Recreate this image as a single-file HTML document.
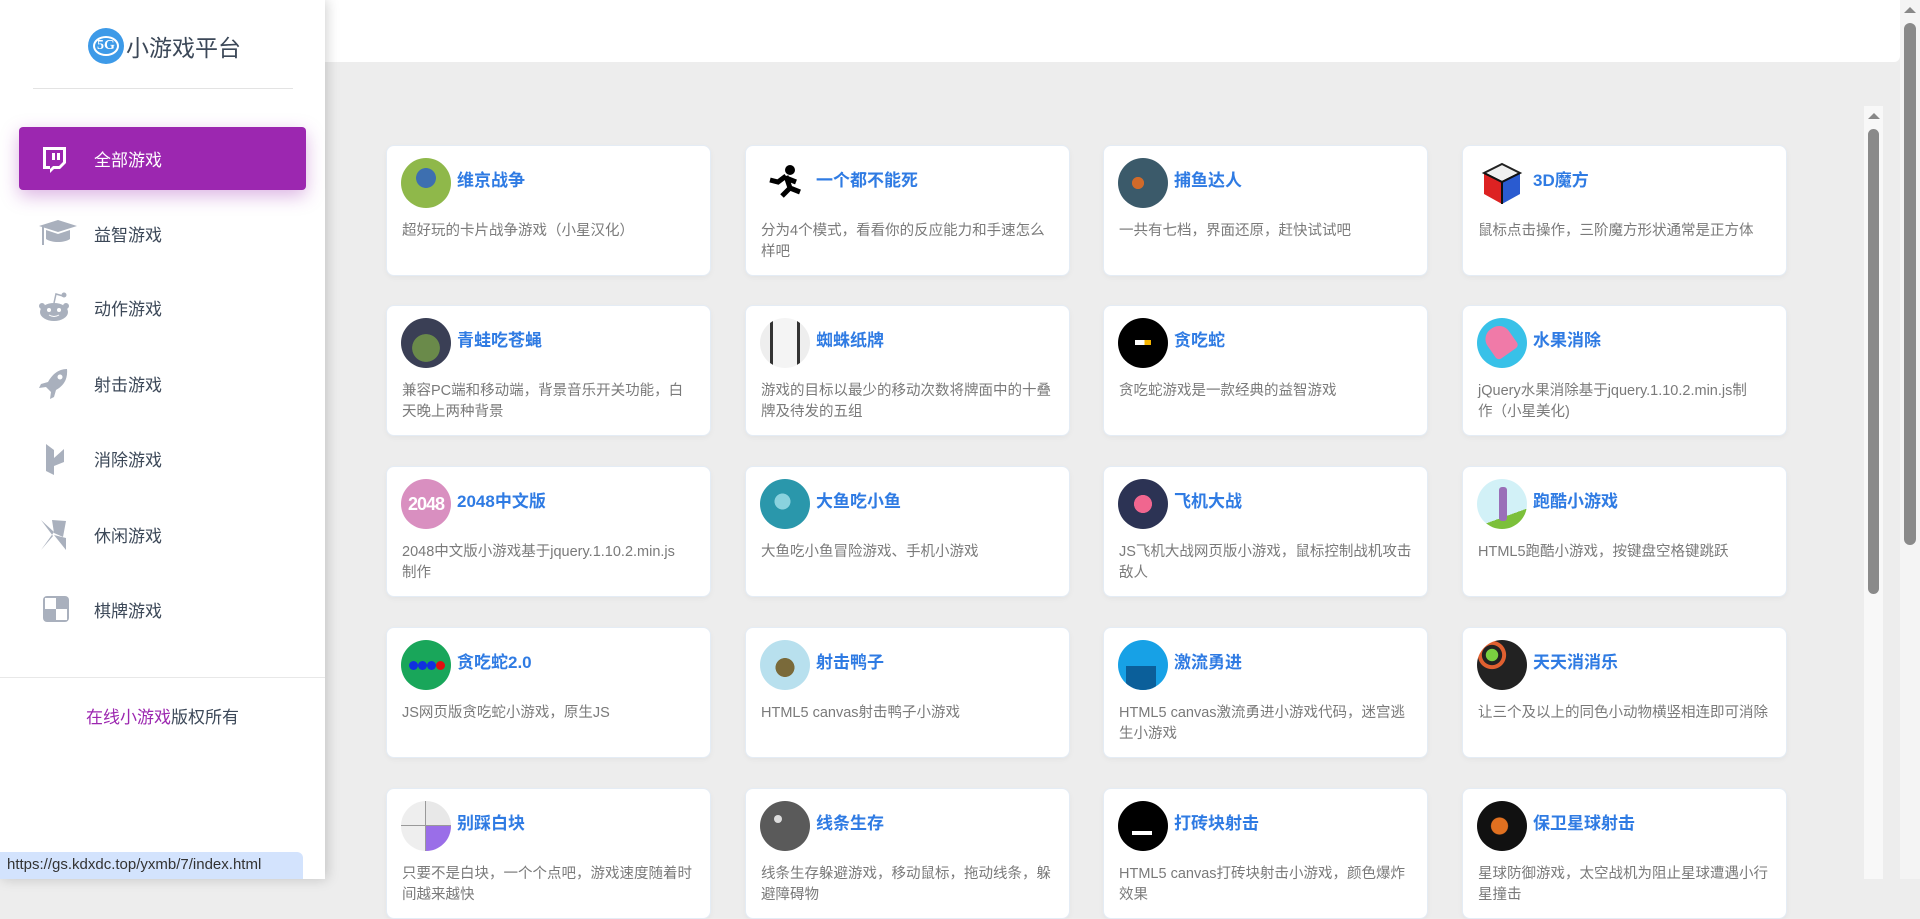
<!DOCTYPE html>
<html><head><meta charset="utf-8">
<style>
*{margin:0;padding:0;box-sizing:border-box}
html,body{width:1920px;height:879px;overflow:hidden;background:#ededed;font-family:"Liberation Sans","Noto Sans CJK SC",sans-serif}
.side{position:absolute;left:0;top:0;width:325px;height:879px;background:#fff;box-shadow:2px 0 12px rgba(0,0,0,.18);z-index:3}
.logo{position:absolute;left:88px;top:27px;height:38px;display:flex;align-items:center;font-size:23px;color:#3c4858}
.logo .c{width:36px;height:36px;border-radius:50%;background:#3d9ae8;color:#fff;font-family:"Liberation Serif",serif;font-size:14px;font-weight:bold;display:flex;align-items:center;justify-content:center;margin-right:2px}
.logo .c span{border:2px solid #fff;border-radius:50%;padding:2px 2px;line-height:12px}
.hr1{position:absolute;left:33px;top:88px;width:260px;height:1px;background:#e3e3e3}
.item{position:absolute;left:19px;width:287px;height:63px;display:flex;align-items:center;font-size:17px;color:#3c4858}
.item svg{position:absolute;left:19px}
.item span{position:absolute;left:75px}
.item.act{background:#9c27b0;color:#fff;border-radius:4px;box-shadow:0 6px 18px rgba(156,39,176,.35)}
.hr2{position:absolute;left:0;top:677px;width:325px;height:1px;background:#e8e8e8}
.foot{position:absolute;left:0;top:703px;width:325px;text-align:center;font-size:17px;color:#3c4858}
.foot b{font-weight:normal;color:#9c27b0}
.status{position:absolute;left:0;top:852px;width:303px;height:27px;background:#d3e3fd;border-top-right-radius:6px;font-size:15px;color:#333;padding:4px 0 0 7px;z-index:5}
.head{position:absolute;left:325px;top:0;width:1575px;height:62px;background:#fff;border-bottom-right-radius:6px}
.card{position:absolute;width:325px;height:131px;background:#fff;border:1px solid #e4ecf5;border-radius:8px;box-shadow:0 2px 6px rgba(0,0,0,.04)}
.ic{position:absolute;left:14px;top:12px;width:50px;height:50px;border-radius:50%;overflow:hidden}
.t{position:absolute;left:70px;top:20px;font-size:17px;font-weight:bold;color:#2f7be3}
.d{position:absolute;left:15px;top:75px;font-size:14.5px;line-height:21px;color:#7a7a7a;white-space:nowrap}
.sb1{position:absolute;left:1864px;top:106px;width:19px;height:773px;background:#f8f8f8}
.sb1 .a{position:absolute;left:4px;top:7px;border-left:6px solid transparent;border-right:6px solid transparent;border-bottom:6px solid #888}
.sb1 .th{position:absolute;left:4px;top:23px;width:11px;height:465px;border-radius:6px;background:#8a8a8a}
.sb2{position:absolute;left:1900px;top:0;width:20px;height:879px;background:#f4f4f4}
.sb2 .a{position:absolute;left:4px;top:7px;border-left:6px solid transparent;border-right:6px solid transparent;border-bottom:6px solid #888}
.sb2 .th{position:absolute;left:4px;top:23px;width:12px;height:522px;border-radius:6px;background:#8a8a8a}
</style></head><body>
<div class="head"></div>
<div class="side">
 <div class="logo"><div class="c"><span>5G</span></div>小游戏平台</div>
 <div class="hr1"></div>
 <div class="item act" style="top:127px"><svg width="30" height="30" viewBox="0 0 30 30"><path d="M5 3h23v16l-6 6h-6l-4 4v-4H5z" fill="#fff"/><path d="M8 6h17v12l-4 4h-6l-3 3v-3H8z" fill="#9c27b0"/><rect x="14" y="9" width="3" height="7" fill="#fff"/><rect x="19" y="9" width="3" height="7" fill="#fff"/></svg><span>全部游戏</span></div>
 <div class="item" style="top:202px"><svg width="40" height="30" viewBox="0 0 40 30"><path d="M1 7l19-6 19 6-19 6z" fill="#a9b0bd"/><path d="M8 11v9c6 4 18 4 24 0v-9l-12 4z" fill="#a9b0bd"/><rect x="4" y="8" width="2" height="18" fill="#a9b0bd"/></svg><span>益智游戏</span></div>
 <div class="item" style="top:276px"><svg width="34" height="32" viewBox="0 0 34 32"><ellipse cx="16" cy="20" rx="14" ry="9" fill="#a9b0bd"/><circle cx="4" cy="14" r="3" fill="#a9b0bd"/><circle cx="28" cy="14" r="3" fill="#a9b0bd"/><path d="M16 11l2-9 7 2" stroke="#a9b0bd" stroke-width="1.5" fill="none"/><circle cx="26" cy="3" r="2.5" fill="#a9b0bd"/><circle cx="11" cy="18" r="2" fill="#fff"/><circle cx="21" cy="18" r="2" fill="#fff"/><path d="M11 23q5 3 10 0" stroke="#fff" fill="none"/></svg><span>动作游戏</span></div>
 <div class="item" style="top:352px"><svg width="34" height="32" viewBox="0 0 34 32"><path d="M29 1c-9 0-15 6-19 13l-7 2-2 4 7-1 5 5-1 7 4-2 2-7c7-4 12-10 11-21z" fill="#a9b0bd"/><circle cx="22" cy="9" r="2.5" fill="#fff"/></svg><span>射击游戏</span></div>
 <div class="item" style="top:427px"><svg width="34" height="32" viewBox="0 0 34 32"><path d="M8 1l8 6v8l-8 2zM8 17l8-2 10 4-10 4-8-2zM26 6l0 13-10-4zM8 21l8 2v9l-8-4z" fill="#a9b0bd"/></svg><span>消除游戏</span></div>
 <div class="item" style="top:503px"><svg width="34" height="32" viewBox="0 0 34 32"><path d="M3 1l13 12L3 31l12-14zM14 1l14 1-12 12zM28 2l-3 16-9-4zM16 16l12 3 0 12z" fill="#a9b0bd"/></svg><span>休闲游戏</span></div>
 <div class="item" style="top:578px"><svg width="34" height="32" viewBox="0 0 34 32"><rect x="5" y="2" width="26" height="26" rx="4" fill="#a9b0bd"/><rect x="7" y="4" width="11" height="11" fill="#fff"/><rect x="18" y="15" width="11" height="11" fill="#fff"/></svg><span>棋牌游戏</span></div>
 <div class="hr2"></div>
 <div class="foot"><b>在线小游戏</b>版权所有</div>
</div>
<div class="status">https://gs.kdxdc.top/yxmb/7/index.html</div>

<div class="card" style="left:386px;top:145px"><div class="ic" style="background:radial-gradient(circle at 50% 40%,#3d6fb0 0 25%,#8fb84a 26%)"></div><div class="t">维京战争</div><div class="d">超好玩的卡片战争游戏（小星汉化）</div></div>
<div class="card" style="left:745px;top:145px"><div class="ic" style="background:#fff"><svg width="50" height="50" viewBox="0 0 50 50"><circle cx="30" cy="12" r="5" fill="#000"/><path d="M26 18l-8 6-8-2M26 18l4 12-8 8M30 30l10 4M26 20l10 4" stroke="#000" stroke-width="5" fill="none"/></svg></div><div class="t">一个都不能死</div><div class="d">分为4个模式，看看你的反应能力和手速怎么<br>样吧</div></div>
<div class="card" style="left:1103px;top:145px"><div class="ic" style="background:radial-gradient(circle at 40% 50%,#d06a2a 0 15%,#3b5a6a 16%)"></div><div class="t">捕鱼达人</div><div class="d">一共有七档，界面还原，赶快试试吧</div></div>
<div class="card" style="left:1462px;top:145px"><div class="ic" style="background:#fff"><svg width="50" height="50" viewBox="0 0 50 50"><path d="M25 6l18 9-18 9-18-9z" fill="#f0f0f0" stroke="#222" stroke-width="2"/><path d="M7 15l18 9v22L7 36z" fill="#d22"/><path d="M43 15l-18 9v22l18-10z" fill="#2a5bd0"/><path d="M7 15l18 9 18-9M25 24v22" stroke="#111" stroke-width="2" fill="none"/></svg></div><div class="t">3D魔方</div><div class="d">鼠标点击操作，三阶魔方形状通常是正方体</div></div>
<div class="card" style="left:386px;top:305px"><div class="ic" style="background:radial-gradient(circle at 50% 60%,#6a8a4a 0 35%,#3a3f55 36%)"></div><div class="t">青蛙吃苍蝇</div><div class="d">兼容PC端和移动端，背景音乐开关功能，白<br>天晚上两种背景</div></div>
<div class="card" style="left:745px;top:305px"><div class="ic" style="background:linear-gradient(90deg,#eee 0 20%,#333 20% 26%,#f4f4f4 26% 74%,#333 74% 80%,#eee 80%)"></div><div class="t">蜘蛛纸牌</div><div class="d">游戏的目标以最少的移动次数将牌面中的十叠<br>牌及待发的五组</div></div>
<div class="card" style="left:1103px;top:305px"><div class="ic" style="background:#000"><div style="position:absolute;left:17px;top:22px;width:16px;height:5px;background:linear-gradient(90deg,#fff 0 60%,#f4b400 60%)"></div></div><div class="t">贪吃蛇</div><div class="d">贪吃蛇游戏是一款经典的益智游戏</div></div>
<div class="card" style="left:1462px;top:305px"><div class="ic" style="background:#38c1e8"><div style="position:absolute;left:10px;top:8px;width:26px;height:30px;border-radius:12px 12px 4px 4px;background:#f07aa8;transform:rotate(-35deg)"></div></div><div class="t">水果消除</div><div class="d">jQuery水果消除基于jquery.1.10.2.min.js制<br>作（小星美化)</div></div>
<div class="card" style="left:386px;top:466px"><div class="ic" style="background:#d98fc0;color:#fff;font-size:18px;font-weight:bold;display:flex;align-items:center;justify-content:center;letter-spacing:-1px">2048</div><div class="t">2048中文版</div><div class="d">2048中文版小游戏基于jquery.1.10.2.min.js<br>制作</div></div>
<div class="card" style="left:745px;top:466px"><div class="ic" style="background:radial-gradient(circle at 45% 45%,#8ad2de 0 20%,#2a97ab 21%)"></div><div class="t">大鱼吃小鱼</div><div class="d">大鱼吃小鱼冒险游戏、手机小游戏</div></div>
<div class="card" style="left:1103px;top:466px"><div class="ic" style="background:radial-gradient(circle at 50% 50%,#f0668f 0 25%,#2c3354 26%)"></div><div class="t">飞机大战</div><div class="d">JS飞机大战网页版小游戏，鼠标控制战机攻击<br>敌人</div></div>
<div class="card" style="left:1462px;top:466px"><div class="ic" style="background:linear-gradient(160deg,#d2f1f7 0 70%,#7cc03a 70%)"><div style="position:absolute;left:22px;top:8px;width:8px;height:34px;background:#9a6fb8;border-radius:3px"></div></div><div class="t">跑酷小游戏</div><div class="d">HTML5跑酷小游戏，按键盘空格键跳跃</div></div>
<div class="card" style="left:386px;top:627px"><div class="ic" style="background:#19a65a"><div style="position:absolute;left:8px;top:21px;width:9px;height:9px;border-radius:50%;background:#1030e0"></div><div style="position:absolute;left:17px;top:21px;width:9px;height:9px;border-radius:50%;background:#1030e0"></div><div style="position:absolute;left:26px;top:21px;width:9px;height:9px;border-radius:50%;background:#1030e0"></div><div style="position:absolute;left:35px;top:21px;width:9px;height:9px;border-radius:50%;background:#e01010"></div></div><div class="t">贪吃蛇2.0</div><div class="d">JS网页版贪吃蛇小游戏，原生JS</div></div>
<div class="card" style="left:745px;top:627px"><div class="ic" style="background:radial-gradient(circle at 50% 55%,#7a6a3a 0 25%,#b8e0ee 26%)"></div><div class="t">射击鸭子</div><div class="d">HTML5 canvas射击鸭子小游戏</div></div>
<div class="card" style="left:1103px;top:627px"><div class="ic" style="background:#17a1e6"><div style="position:absolute;left:8px;top:26px;width:30px;height:24px;background:#0b5f9a"></div></div><div class="t">激流勇进</div><div class="d">HTML5 canvas激流勇进小游戏代码，迷宫逃<br>生小游戏</div></div>
<div class="card" style="left:1462px;top:627px"><div class="ic" style="background:radial-gradient(circle at 30% 30%,#7bd040 0 12%,#222 13% 20%,#e06030 21% 28%,#222 29%)"></div><div class="t">天天消消乐</div><div class="d">让三个及以上的同色小动物横竖相连即可消除</div></div>
<div class="card" style="left:386px;top:788px"><div class="ic" style="background:linear-gradient(90deg,#eee 50%,#e8e8e8 50%)"><div style="position:absolute;left:25px;top:25px;width:25px;height:25px;background:#9a6ee8"></div><div style="position:absolute;left:24px;top:0;width:1px;height:50px;background:#999"></div><div style="position:absolute;left:0;top:24px;width:50px;height:1px;background:#999"></div></div><div class="t">别踩白块</div><div class="d">只要不是白块，一个个点吧，游戏速度随着时<br>间越来越快</div></div>
<div class="card" style="left:745px;top:788px"><div class="ic" style="background:#5a5a5a"><div style="position:absolute;left:14px;top:14px;width:8px;height:8px;border-radius:50%;background:#ddd"></div></div><div class="t">线条生存</div><div class="d">线条生存躲避游戏，移动鼠标，拖动线条，躲<br>避障碍物</div></div>
<div class="card" style="left:1103px;top:788px"><div class="ic" style="background:#000"><div style="position:absolute;left:14px;top:30px;width:20px;height:4px;background:#fff"></div></div><div class="t">打砖块射击</div><div class="d">HTML5 canvas打砖块射击小游戏，颜色爆炸<br>效果</div></div>
<div class="card" style="left:1462px;top:788px"><div class="ic" style="background:radial-gradient(circle at 45% 50%,#e07020 0 22%,#111 24%)"></div><div class="t">保卫星球射击</div><div class="d">星球防御游戏，太空战机为阻止星球遭遇小行<br>星撞击</div></div>

<div class="sb1"><div class="a"></div><div class="th"></div></div>
<div class="sb2"><div class="a"></div><div class="th"></div></div>
</body></html>
